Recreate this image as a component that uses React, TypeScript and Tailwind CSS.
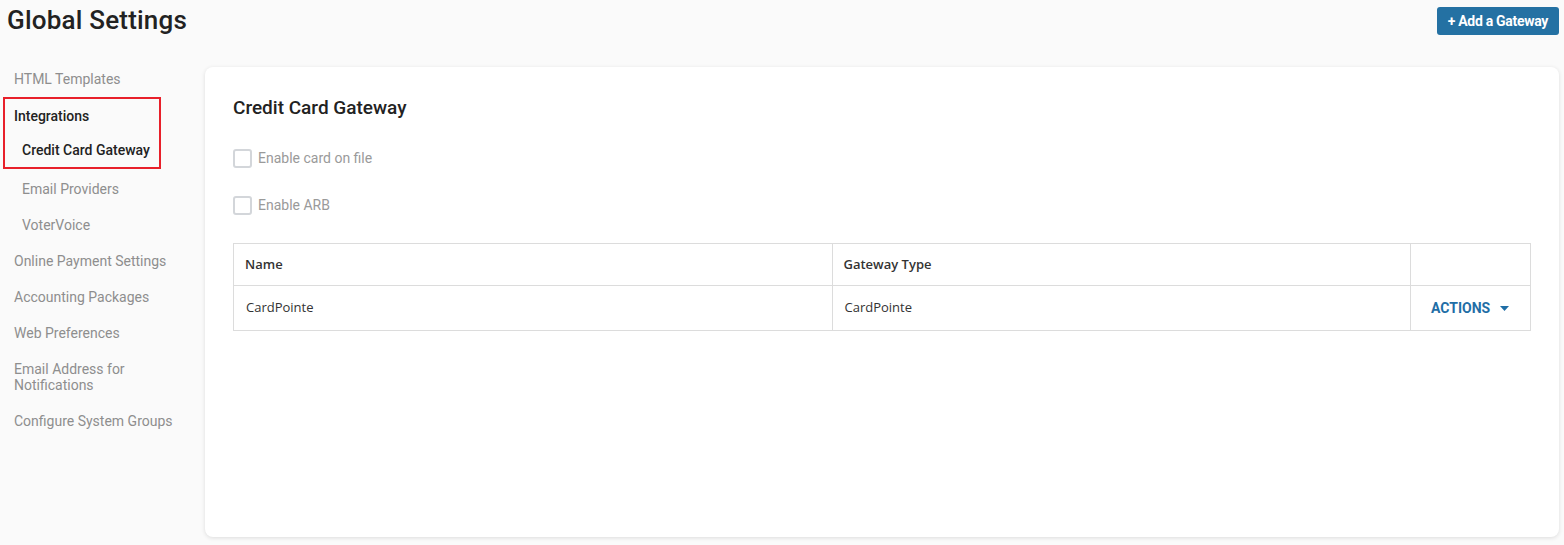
import React from "react";

const roboto = { fontFamily: "Roboto, 'Liberation Sans', sans-serif" };
const openSans = { fontFamily: "'Open Sans', 'Liberation Sans', sans-serif" };

function NavItem({ label, indent = false, className = "" }: { label: string; indent?: boolean; className?: string }) {
  return <div className={`py-2 text-[14px] leading-5 text-[#8e8e8e] ${indent ? "pl-2" : ""} ${className}`}>{label}</div>;
}

function Checkbox({ label }: { label: string }) {
  return (
    <label className="flex items-center h-[19px]">
      <span className="w-[19px] h-[19px] rounded-[3px] border-2 border-[#d3d6da] bg-white" />
      <span className="ml-[6px] text-[14px] text-[#9a9a9a]">{label}</span>
    </label>
  );
}

export default function App() {
  return (
    <div className="w-full h-[545px] bg-[#fafafa] overflow-hidden" style={roboto}>
      {/* HEADER */}
      <div className="h-[61px] flex justify-between items-start pl-[7px] pr-[5px]">
        <h1 className="pt-[5px] text-[26px] leading-[30px] font-medium tracking-[0.2px] text-[#222]">Global Settings</h1>
        <button className="mt-[7px] h-[28px] px-[11px] rounded-[3px] bg-[#2471a3] text-white text-[14px] font-bold tracking-[-0.3px]">
          + Add a Gateway
        </button>
      </div>

      <div className="flex">
        {/* SIDEBAR */}
        <div className="w-[205px] shrink-0 pl-[14px] pr-[11px]">
          <NavItem label="HTML Templates" />
          <div className="-ml-[11px] w-[158px] border-2 border-[#e8202a] pl-[9px]">
            <div className="h-[34px] flex items-center text-[14px] text-[#222] font-medium">Integrations</div>
            <div className="h-[34px] flex items-center pl-2 text-[14px] text-[#222] font-medium">
              Credit Card Gateway
            </div>
          </div>
          <NavItem label="Email Providers" indent className="mt-[2px]" />
          <NavItem label="VoterVoice" indent />
          <NavItem label="Online Payment Settings" />
          <NavItem label="Accounting Packages" />
          <NavItem label="Web Preferences" />
          <div className="py-[10px] text-[14px] leading-4 text-[#8e8e8e]">Email Address for Notifications</div>
          <NavItem label="Configure System Groups" />
        </div>

        {/* CARD */}
        <div className="flex-1 mt-[6px] mr-[5px] h-[470px] rounded-lg bg-white shadow-[0_1px_4px_rgba(0,0,0,0.12)] px-[28px] pt-[29px]">
          <h2 className="text-[19px] leading-6 font-medium text-[#222]">Credit Card Gateway</h2>
          <div className="mt-[29px]">
            <Checkbox label="Enable card on file" />
          </div>
          <div className="mt-[28px]">
            <Checkbox label="Enable ARB" />
          </div>

          <table className="mt-[28px] w-full border-collapse text-[13px] text-[#333]" style={openSans}>
            <thead>
              <tr className="h-[42px] text-left">
                <th className="border border-[#dcdcdc] pl-[11px] font-semibold w-[599px]">Name</th>
                <th className="border border-[#dcdcdc] pl-[11px] font-semibold w-[579px]">Gateway Type</th>
                <th className="border border-[#dcdcdc] w-[120px]" />
              </tr>
            </thead>
            <tbody>
              <tr className="h-[45px]">
                <td className="border border-[#dcdcdc] pl-[12px]">CardPointe</td>
                <td className="border border-[#dcdcdc] pl-[12px]">CardPointe</td>
                <td className="border border-[#dcdcdc] pl-[20px]">
                  <span className="flex items-center text-[#1f6ea6] font-bold text-[14px]" style={roboto}>
                    ACTIONS
                    <svg className="ml-[10px]" width="9" height="5" viewBox="0 0 9 5">
                      <path d="M0 0h9L4.5 5z" fill="#1f6ea6" />
                    </svg>
                  </span>
                </td>
              </tr>
            </tbody>
          </table>
        </div>
      </div>
    </div>
  );
}
